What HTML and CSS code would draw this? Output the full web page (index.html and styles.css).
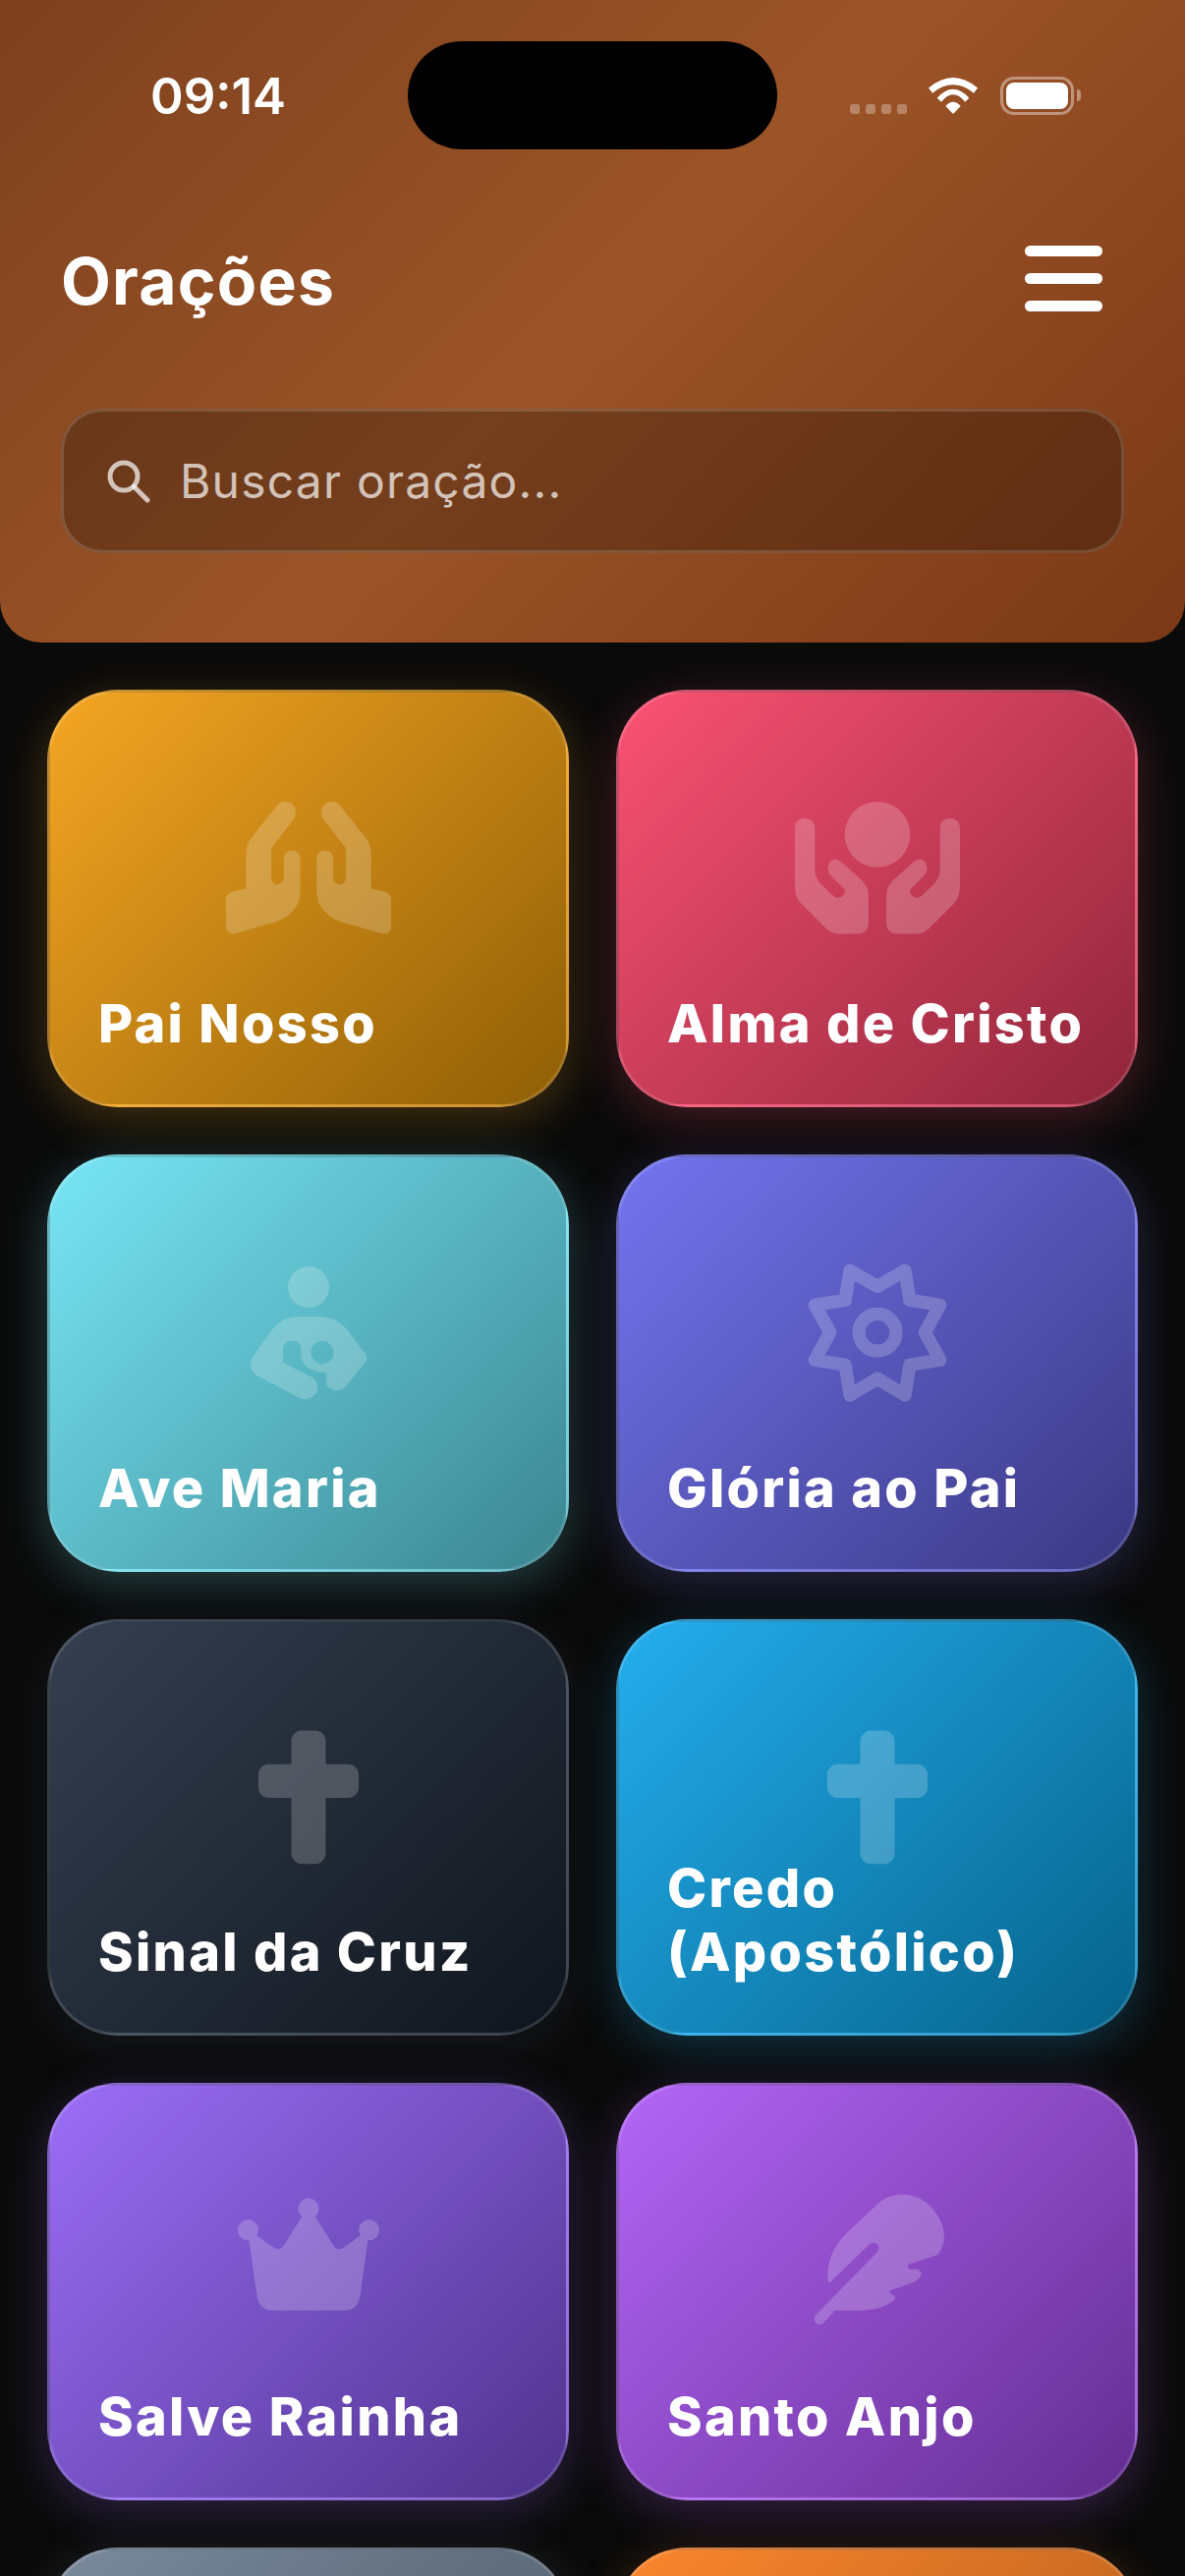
FILE: index.html
```html
<!DOCTYPE html>
<html lang="pt-BR">

<head>
  <meta charset="UTF-8" />
  <meta name="viewport" content="width=device-width, initial-scale=1.0" />
  <title>Orações</title>
  <link rel="stylesheet" href="styles.css">
</head>

<body>
  <header class="header">
    <div class="island"></div>

    <div class="status-bar">
      <span class="time">09:14</span>
      <div class="status-icons">
        <div class="signal"><i></i><i></i><i></i><i></i></div>
        <svg class="wifi" viewBox="0 0 50 37" fill="#fff">
          <path d="M0 10.5Q25 -10.5 50 10.5L46 15.7Q25 -1.1 4 15.7Z" />
          <path d="M8.7 20.7Q25 2.7 41.3 20.7L37.3 24.7Q25 9.9 13 24.7Z" />
          <path d="M17.3 29Q25 20.4 32.7 29L25 37Z" />
        </svg>
        <div class="battery">
          <div class="battery-level"></div>
        </div>
        <div class="battery-nub"></div>
      </div>
    </div>

    <div class="title-row">
      <h1>Orações</h1>
      <button class="menu-button"><span></span><span></span><span></span></button>
    </div>

    <div class="search">
      <svg class="search-icon" viewBox="0 0 45 45" fill="none" stroke="currentColor" stroke-width="5" stroke-linecap="round">
        <circle cx="18" cy="18" r="14" />
        <path d="M28.5 28.5L42 42" />
      </svg>
      <span class="search-text">Buscar oração...</span>
    </div>
  </header>

  <main class="grid">
    <div class="card amber">
      <svg class="card-icon" viewBox="0 0 24 24" fill="#fff">
        <path d="M7.4 2.9C7.8 2.2 8.9 2 9.6 2.6C10.2 3.2 10.3 4 9.9 4.8L6.6 9V13.4C6.6 14 7 14.3 7.4 14.3C7.9 14.3 8.4 14 8.4 13.4V10.6C8.4 9.9 8.9 9.4 9.6 9.4C10.3 9.4 10.8 9.9 10.8 10.6V15.2C10.8 16.5 10.4 17.5 9.6 18.3C9 19 8.3 19.4 7.4 19.7L1.6 21.4C.7 21.7 0 21.3 0 20.4V16.4C0 15.9 .4 15.6 .9 15.4L2.9 14.9V10.5C2.9 9.5 3 8.7 3.4 7.9Z" />
        <path transform="matrix(-1 0 0 1 24 0)" d="M7.4 2.9C7.8 2.2 8.9 2 9.6 2.6C10.2 3.2 10.3 4 9.9 4.8L6.6 9V13.4C6.6 14 7 14.3 7.4 14.3C7.9 14.3 8.4 14 8.4 13.4V10.6C8.4 9.9 8.9 9.4 9.6 9.4C10.3 9.4 10.8 9.9 10.8 10.6V15.2C10.8 16.5 10.4 17.5 9.6 18.3C9 19 8.3 19.4 7.4 19.7L1.6 21.4C.7 21.7 0 21.3 0 20.4V16.4C0 15.9 .4 15.6 .9 15.4L2.9 14.9V10.5C2.9 9.5 3 8.7 3.4 7.9Z" />
      </svg>
      <h3>Pai Nosso</h3>
    </div>

    <div class="card rose">
      <svg class="card-icon" viewBox="0 0 24 24" fill="#fff">
        <circle cx="12" cy="7.05" r="4.76" />
        <path d="M0 6.1C0 5.2 .6 4.7 1.45 4.7C2.3 4.7 2.9 5.2 2.9 6.1V12.4C2.9 13 3.3 13.7 3.8 14.3L5.6 16C6 16.3 6.5 16.3 6.9 16C7.3 15.7 7.4 15.3 7.2 15L5.3 13.1C4.9 12.7 4.7 12.3 4.8 11.9C4.9 11.1 5.3 10.7 5.6 10.7C6.1 10.6 6.4 10.8 6.7 11L9.6 13.6C10.3 14.3 10.7 15 10.7 16V20C10.7 20.9 10.1 21.5 9.3 21.5H6.4C5.6 21.5 5 21.2 4.5 20.7L.9 17.1C.3 16.5 0 15.6 0 14.5Z" />
        <path transform="matrix(-1 0 0 1 24 0)" d="M0 6.1C0 5.2 .6 4.7 1.45 4.7C2.3 4.7 2.9 5.2 2.9 6.1V12.4C2.9 13 3.3 13.7 3.8 14.3L5.6 16C6 16.3 6.5 16.3 6.9 16C7.3 15.7 7.4 15.3 7.2 15L5.3 13.1C4.9 12.7 4.7 12.3 4.8 11.9C4.9 11.1 5.3 10.7 5.6 10.7C6.1 10.6 6.4 10.8 6.7 11L9.6 13.6C10.3 14.3 10.7 15 10.7 16V20C10.7 20.9 10.1 21.5 9.3 21.5H6.4C5.6 21.5 5 21.2 4.5 20.7L.9 17.1C.3 16.5 0 15.6 0 14.5Z" />
      </svg>
      <h3>Alma de Cristo</h3>
    </div>

    <div class="card cyan">
      <svg class="card-icon" viewBox="0 0 24 24" fill="#fff">
        <circle cx="12" cy="5.3" r="3" />
        <path fill-rule="evenodd" d="M10.4 9.6H13.6C15.6 9.6 17 10.6 18 12L20.2 14.9C20.6 15.5 20.6 15.9 20.2 16.3L17.7 19.4C17.2 20.1 16.7 20.3 16.2 20.3C15.2 20.3 14.4 19.6 14.6 19.1V17.8C13.4 17.7 12.5 17.4 11.9 17C11.4 16.6 11.1 16.2 10.9 15.7V14.1C10.9 13.5 10.3 13.1 9.6 13.1C8.9 13.1 8.3 13.5 8.3 14.1V16.3L12.2 18.2C12.9 18.6 13.3 19.2 13.3 19.9C13.3 20.9 12.4 21.6 11.4 21.6C11.1 21.6 10.8 21.5 10.5 21.3L4.9 18.4C4.1 18 3.6 17.4 3.6 16.7C3.6 16.3 3.6 16 3.8 15.6L6.7 11.5C7.6 10.3 8.8 9.6 10.4 9.6ZM14 13.15A1.64 1.64 0 1 0 14 16.45A1.64 1.64 0 1 0 14 13.15Z" />
      </svg>
      <h3>Ave Maria</h3>
    </div>

    <div class="card indigo">
      <svg class="card-icon" viewBox="0 0 24 24" fill="none" stroke="#fff" stroke-width="1.9" stroke-linejoin="round">
        <path d="M8 2.9L12 5.2L16 2.9L16.7 7.2L21.1 7.9L18.9 11.9L21.1 15.9L16.7 16.6L16 21L12 18.6L8 21L7.3 16.6L2.9 15.9L5.1 11.9L2.9 7.9L7.3 7.2Z" />
        <circle cx="12" cy="11.9" r="2.7" />
      </svg>
      <h3>Glória ao Pai</h3>
    </div>

    <div class="card slate">
      <svg class="card-icon" viewBox="0 0 24 24" fill="#fff">
        <path d="M9.5 3.7C9.5 2.9 10.2 2.2 11 2.2H13C13.8 2.2 14.5 2.9 14.5 3.7V7.1H17.8C18.6 7.1 19.3 7.8 19.3 8.6V10.5C19.3 11.3 18.6 12 17.8 12H14.5V20.1C14.5 20.9 13.8 21.6 13 21.6H11C10.2 21.6 9.5 20.9 9.5 20.1V12H6.2C5.4 12 4.7 11.3 4.7 10.5V8.6C4.7 7.8 5.4 7.1 6.2 7.1H9.5Z" />
      </svg>
      <h3>Sinal da Cruz</h3>
    </div>

    <div class="card sky">
      <svg class="card-icon" viewBox="0 0 24 24" fill="#fff">
        <path d="M9.5 3.7C9.5 2.9 10.2 2.2 11 2.2H13C13.8 2.2 14.5 2.9 14.5 3.7V7.1H17.8C18.6 7.1 19.3 7.8 19.3 8.6V10.5C19.3 11.3 18.6 12 17.8 12H14.5V20.1C14.5 20.9 13.8 21.6 13 21.6H11C10.2 21.6 9.5 20.9 9.5 20.1V12H6.2C5.4 12 4.7 11.3 4.7 10.5V8.6C4.7 7.8 5.4 7.1 6.2 7.1H9.5Z" />
      </svg>
      <h3>Credo (Apostólico)</h3>
    </div>

    <div class="card violet">
      <svg class="card-icon" viewBox="0 0 24 24" fill="#fff">
        <circle cx="12" cy="4.3" r="1.5" />
        <circle cx="3.2" cy="7.4" r="1.5" />
        <circle cx="20.8" cy="7.4" r="1.5" />
        <path d="M3.3 8.4L4.5 8.25L7 10C7.6 10.3 8 10.2 8.3 9.8L11 5.5H13L15.7 9.8C16 10.2 16.4 10.3 17 10L19.5 8.25L20.7 8.4L19.5 17C19.3 18.3 18.5 19.1 17.3 19.1H6.7C5.5 19.1 4.7 18.3 4.5 17Z" />
      </svg>
      <h3>Salve Rainha</h3>
    </div>

    <div class="card purple">
      <svg class="card-icon" viewBox="0 0 24 24" fill="#fff">
        <path d="M2.9 19.9C2.7 20.5 3 21.1 3.5 21.1C3.8 21.1 4 21.1 4.2 20.9L5.8 19.1H9.3C10.6 19.1 11.7 18.9 12.6 18.6C13.4 18.3 14.1 17.9 14.6 17.4C14.6 17.1 14.3 16.9 14 16.7C13.8 16.5 13.7 16.4 13.8 16.2L17.3 15C17.9 14.6 18.3 14.3 18.4 13.8C18.4 13.4 18 13.1 17.6 13.1H16.6C16.4 12.9 16.4 12.6 16.5 12.4L20.8 11C21.4 10.1 21.7 9.2 21.7 8.4C21.7 7 21.1 5.7 20.2 4.5C19 3 17.4 2.25 15.7 2.25C13.9 2.25 12.5 3 11.5 4.1L7.46 7.9C5.6 9.8 4.76 11.8 4.76 14.1V14.8C4.9 15 5.1 15 5.27 14.9L10.74 9.55C11 9.3 11.2 9.2 11.47 9.2C11.9 9.3 12.2 9.6 12.2 10C12.2 10.3 12 10.6 11.8 10.8Z" />
      </svg>
      <h3>Santo Anjo</h3>
    </div>

    <div class="card gray"></div>
    <div class="card orange"></div>
  </main>
</body>

</html>
```

FILE: styles.css
```css
* {
  margin: 0;
  padding: 0;
  box-sizing: border-box;
}

body {
  height: 2622px;
  background: #0a0a0a;
  font-family: Inter, 'Liberation Sans', sans-serif;
  color: #ffffff;
  overflow: hidden;
}

.header {
  position: relative;
  height: 654px;
  padding: 78px 62px 0;
  background: linear-gradient(135deg, #7d411e 0%, #9c5427 50%, #7a3816 100%);
  border-radius: 0 0 42px 42px;
}

.island {
  position: absolute;
  top: 42px;
  left: 415px;
  width: 376px;
  height: 110px;
  background: #000;
  border-radius: 55px;
}

.status-bar {
  display: flex;
  align-items: center;
  justify-content: space-between;
  height: 39px;
  padding: 0 44px 0 91px;
}

.time {
  font-size: 51px;
  font-weight: 600;
}

.status-icons {
  display: flex;
  align-items: flex-end;
}

.signal {
  display: flex;
  gap: 6px;
  margin-right: 22px;
}

.signal i {
  width: 10px;
  height: 10px;
  margin-bottom: 1px;
  background: rgba(255, 255, 255, 0.3);
  border-radius: 3px;
}

.wifi {
  width: 50px;
  height: 37px;
  margin-right: 23px;
  margin-bottom: 1px;
}

.battery {
  width: 75px;
  height: 39px;
  padding: 3px;
  border: 3px solid rgba(255, 255, 255, 0.4);
  border-radius: 14px;
}

.battery-level {
  height: 100%;
  background: #fff;
  border-radius: 8px;
}

.battery-nub {
  width: 4px;
  height: 12px;
  margin: 0 0 14px 3px;
  background: rgba(255, 255, 255, 0.4);
  border-radius: 0 4px 4px 0;
}

.title-row {
  display: flex;
  align-items: center;
  justify-content: space-between;
  height: 84px;
  margin-top: 124px;
}

h1 {
  padding-top: 6px;
  font-size: 66px;
  font-weight: 700;
  letter-spacing: 1.2px;
}

.menu-button {
  display: flex;
  flex-direction: column;
  gap: 17px;
  padding-right: 22px;
  background: none;
  border: none;
}

.menu-button span {
  width: 79px;
  height: 11px;
  background: #fff;
  border-radius: 6px;
}

.search {
  display: flex;
  align-items: center;
  gap: 30px;
  height: 147px;
  margin-top: 91px;
  padding: 0 43px;
  background: rgba(0, 0, 0, 0.25);
  border: 3px solid rgba(255, 255, 255, 0.15);
  border-radius: 42px;
}

.search-icon {
  width: 45px;
  height: 45px;
  color: rgba(255, 255, 255, 0.7);
}

.search-text {
  font-size: 48px;
  letter-spacing: 1.2px;
  color: rgba(255, 255, 255, 0.7);
}

.grid {
  display: grid;
  grid-template-columns: 1fr 1fr;
  gap: 48px;
  padding: 48px;
}

.card {
  position: relative;
  display: flex;
  align-items: flex-end;
  aspect-ratio: 1.25;
  padding: 50px 49px;
  border: 3px solid rgba(255, 255, 255, 0.13);
  border-radius: 72px;
}

.card-icon {
  position: absolute;
  top: 95px;
  left: 50%;
  width: 168px;
  height: 168px;
  margin-left: -84px;
  opacity: 0.2;
}

.card h3 {
  font-size: 54px;
  font-weight: 800;
  line-height: 65px;
  letter-spacing: 2.3px;
}

.amber {
  background: linear-gradient(135deg, #f5a623, #8f5e05);
  box-shadow: 0 12px 48px rgba(245, 166, 35, 0.25);
}

.rose {
  background: linear-gradient(135deg, #fb5274, #8f2539);
  box-shadow: 0 12px 48px rgba(251, 82, 116, 0.25);
}

.cyan {
  background: linear-gradient(135deg, #78e6f5, #3a8590);
  box-shadow: 0 12px 48px rgba(120, 230, 245, 0.25);
}

.indigo {
  background: linear-gradient(135deg, #7475f0, #393883);
  box-shadow: 0 12px 48px rgba(118, 119, 243, 0.25);
}

.slate {
  background: linear-gradient(135deg, #343f50, #0f151d);
  box-shadow: 0 12px 48px rgba(52, 63, 80, 0.25);
}

.sky {
  background: linear-gradient(135deg, #24aeee, #05628a);
  box-shadow: 0 12px 48px rgba(36, 174, 238, 0.25);
}

.violet {
  background: linear-gradient(135deg, #9b6ef7, #4f338d);
  box-shadow: 0 12px 48px rgba(155, 110, 247, 0.25);
}

.purple {
  background: linear-gradient(135deg, #b366f7, #632d91);
  box-shadow: 0 12px 48px rgba(179, 102, 247, 0.25);
}

.gray {
  background: linear-gradient(135deg, #7a8a9c, #46525f);
  box-shadow: 0 12px 48px rgba(122, 138, 156, 0.25);
}

.orange {
  background: linear-gradient(135deg, #fb862d, #a8561a);
  box-shadow: 0 12px 48px rgba(251, 134, 45, 0.25);
}
```
